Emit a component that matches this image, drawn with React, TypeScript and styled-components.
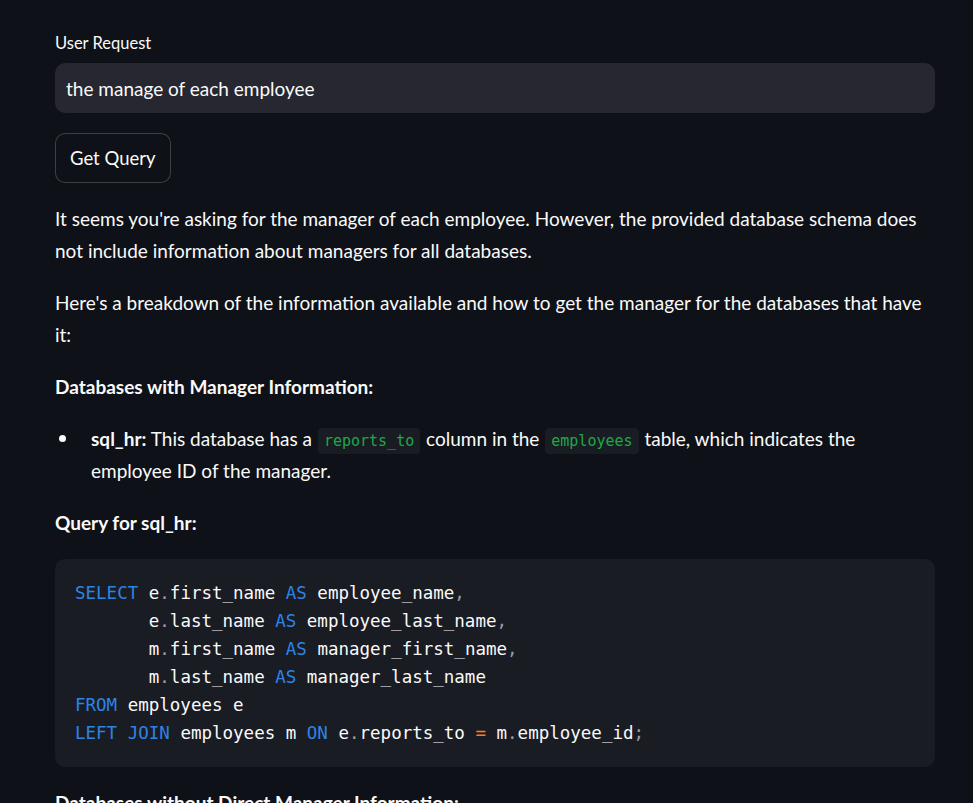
import React from "react";
import styled, { createGlobalStyle } from "styled-components";

const Global = createGlobalStyle`
  html, body { margin: 0; padding: 0; background: #0e1117; }
  body {
    color: #fafafa;
    font-family: Lato, "Noto Sans", sans-serif;
    -webkit-font-smoothing: antialiased;
  }
`;

const Page = styled.div`
  background: #0e1117;
  padding: 29px 38px 0 55px;
  box-sizing: border-box;
  overflow: hidden;
  height: 803px;
`;

const Main = styled.main`
  width: 880px;
  display: flex;
  flex-direction: column;
`;

const Label = styled.label`
  font-size: 16.5px;
  line-height: 28px;
  margin-bottom: 6px;
`;

const Input = styled.input`
  height: 50px;
  box-sizing: border-box;
  border: none;
  outline: none;
  border-radius: 10px;
  background: #262730;
  color: #fafafa;
  font-family: inherit;
  font-size: 19px;
  padding: 0 11px;
`;

const Button = styled.button`
  align-self: flex-start;
  margin-top: 20px;
  height: 50px;
  box-sizing: border-box;
  padding: 0 14px;
  border: 1px solid rgba(250, 250, 250, 0.2);
  border-radius: 10px;
  background: #0e1117;
  color: #fafafa;
  font-family: inherit;
  font-size: 18.5px;
`;

const Markdown = styled.div`
  margin-top: 20px;
  font-size: 19px;
  line-height: 32px;
  display: flex;
  flex-direction: column;
  gap: 20px;
`;

const P = styled.p`
  margin: 0;
`;

const Heading = styled.p`
  margin: 0;
  font-weight: 700;
`;

const List = styled.ul`
  margin: 0;
  padding-left: 36px;
  list-style: none;
`;

const Item = styled.li`
  position: relative;
  &::before {
    content: "";
    position: absolute;
    left: -32px;
    top: 12px;
    width: 7px;
    height: 7px;
    border-radius: 50%;
    background: #fafafa;
  }
`;

const InlineCode = styled.code`
  font-family: "DejaVu Sans Mono", "Liberation Mono", monospace;
  font-size: 15px;
  line-height: 1;
  color: #1fa846;
  background: #1a1c24;
  border-radius: 4px;
  padding: 4px 6px;
  margin: 0 1px;
`;

const CodeBlock = styled.pre`
  margin: 0;
  background: #1a1c24;
  border-radius: 10px;
  padding: 20px;
  font-family: "DejaVu Sans Mono", "Liberation Mono", monospace;
  font-size: 17.5px;
  line-height: 28px;
  color: #fafafa;
`;

const Kw = styled.span`
  color: #2c84e3;
`;
const Punct = styled.span`
  color: #9a9ca3;
`;
const Op = styled.span`
  color: #ff7d1f;
`;

export default function App() {
  return (
    <>
      <Global />
      <Page>
        <Main>
          <Label>User Request</Label>
          <Input defaultValue="the manage of each employee" />
          <Button>Get Query</Button>
          <Markdown>
            <P>
              It seems you're asking for the manager of each employee. However, the provided database schema does
              not include information about managers for all databases.
            </P>
            <P>
              Here's a breakdown of the information available and how to get the manager for the databases that have
              it:
            </P>
            <Heading>Databases with Manager Information:</Heading>
            <List>
              <Item>
                <strong>sql_hr:</strong> This database has a <InlineCode>reports_to</InlineCode> column in the{" "}
                <InlineCode>employees</InlineCode> table, which indicates the employee ID of the manager.
              </Item>
            </List>
            <Heading>Query for sql_hr:</Heading>
            <CodeBlock>
              <Kw>SELECT</Kw> e<Punct>.</Punct>first_name <Kw>AS</Kw> employee_name<Punct>,</Punct>
              {"\n       "}e<Punct>.</Punct>last_name <Kw>AS</Kw> employee_last_name<Punct>,</Punct>
              {"\n       "}m<Punct>.</Punct>first_name <Kw>AS</Kw> manager_first_name<Punct>,</Punct>
              {"\n       "}m<Punct>.</Punct>last_name <Kw>AS</Kw> manager_last_name
              {"\n"}
              <Kw>FROM</Kw> employees e{"\n"}
              <Kw>LEFT</Kw> <Kw>JOIN</Kw> employees m <Kw>ON</Kw> e<Punct>.</Punct>reports_to <Op>=</Op> m
              <Punct>.</Punct>employee_id<Punct>;</Punct>
            </CodeBlock>
            <Heading>Databases without Direct Manager Information:</Heading>
          </Markdown>
        </Main>
      </Page>
    </>
  );
}
